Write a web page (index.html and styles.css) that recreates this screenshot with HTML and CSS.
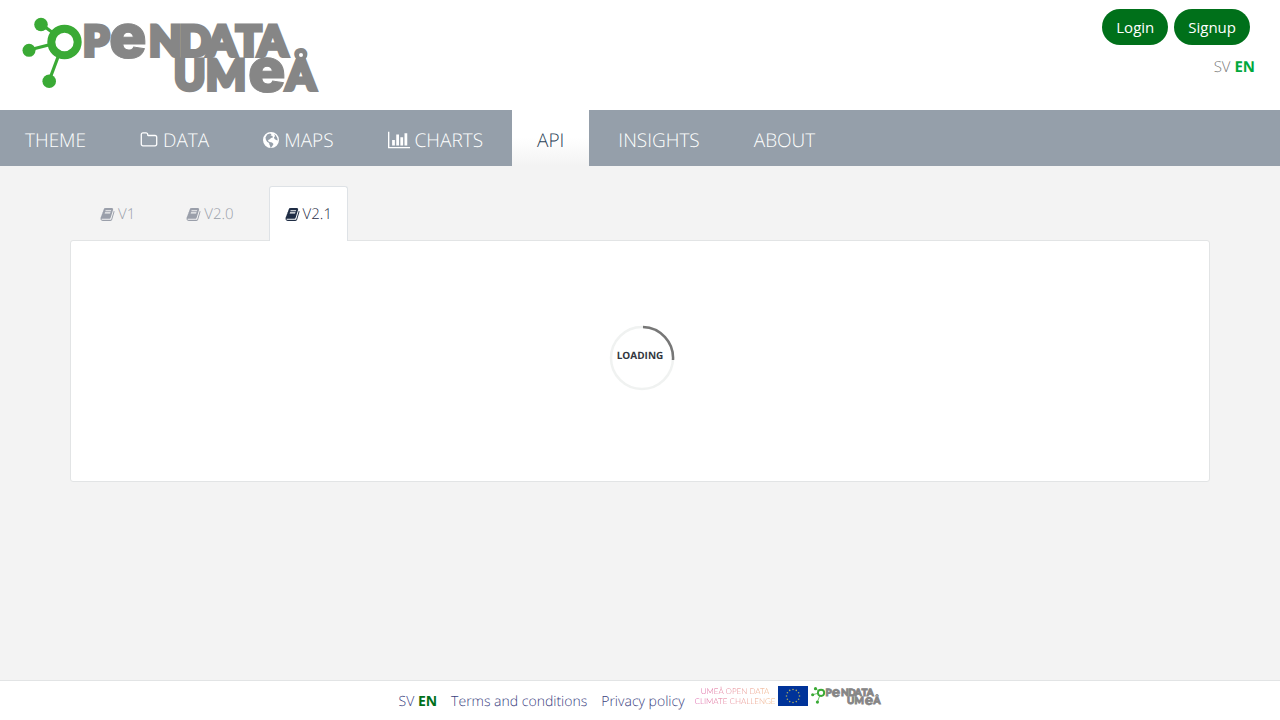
FILE: index.html
```html
<!DOCTYPE html>
<html lang="en">
<head>
  <meta charset="UTF-8" />
  <meta name="viewport" content="width=device-width, initial-scale=1.0"/>
  <title>API - Open Data Umeå</title>
  <link rel="stylesheet" href="styles.css">
</head>
<body>

  <!-- Shared icons -->
  <svg class="sprite" aria-hidden="true">
    <symbol id="logo" viewBox="22 17 296 77" overflow="visible">
      <g stroke="#3aaa35" stroke-width="3.2">
        <path d="M41 24L64 41L29 50M64 41L49 81" fill="none"/>
      </g>
      <g fill="#3aaa35">
        <circle cx="41" cy="24.500" r="6.800"/>
        <circle cx="29" cy="50.300" r="6.500"/>
        <circle cx="49.200" cy="81.200" r="6.800"/>
      </g>
      <circle cx="64.500" cy="42" r="13.200" fill="#fff" stroke="#3aaa35" stroke-width="8"/>
      <g class="logo-text">
        <text y="56" x="83">P</text>
        <text y="58" x="109" class="logo-e">e</text>
        <text y="56" x="149 179 207 236 258">NDATA</text>
        <text y="90" x="174 206">UM</text>
        <text y="92" x="248" class="logo-e">e</text>
        <text y="90" x="286">Å</text>
      </g>
      <circle cx="301" cy="55" r="4" fill="#fff" stroke="#868686" stroke-width="4"/>
    </symbol>
    <symbol id="folder" viewBox="0 0 1792 1792">
      <path d="M1600 1312v-704q0-40-28-68t-68-28h-704q-40 0-68-28t-28-68v-64q0-40-28-68t-68-28h-320q-40 0-68 28t-28 68v960q0 40 28 68t68 28h1216q40 0 68-28t28-68zm128-704v704q0 92-66 158t-158 66h-1216q-92 0-158-66t-66-158v-960q0-92 66-158t158-66h320q92 0 158 66t66 158v32h672q92 0 158 66t66 158z"/>
    </symbol>
    <symbol id="globe" viewBox="1 1 16 16">
      <path fill-rule="evenodd" d="M9 1a8 8 0 1 0 0 16a8 8 0 0 0 0-16zM5.200 3.600L8 2.600l1.500.6l-1 1.200l1.600.4l1 1.500l-2 .6l-1.700 1.700l-1.300.3l.2 1.300l1.500.9l2.200.3l1.500 1.500l-.8 1.700l-1.300 1.600l-.8.8l-.5-2l-.8-1.700l-.2-1.300l-2-1.200l-1.200-2l-.4-2.300zM12 3l1.800 1.300l1.500 2.700l.4 2.500l-1.500-.4l-1.700-1.200l-.5-1.600l1.200-1.400z"/>
    </symbol>
    <symbol id="chart" viewBox="0 0 2048 1792">
      <path d="M640 896v512h-256v-512h256zm384-512v1024h-256v-1024h256zm1024 1152v128h-2048v-1536h128v1408h1920zm-640-896v768h-256v-768h256zm384-384v1152h-256v-1152h256z"/>
    </symbol>
    <symbol id="book" viewBox="0 0 1792 1792">
      <path d="M1703 478q40 57 18 129l-275 906q-19 64-76.500 107.500t-122.500 43.500h-923q-77 0-148.500-53.500t-99.500-131.500q-24-67-2-127 0-4 3-27t4-37q1-8-3-21.500t-3-19.500q2-11 8-21t16.500-23.500 16.500-23.500q23-38 45-91.500t30-91.500q3-10 .5-30t-.5-28q3-11 17-28t17-23q21-36 42-92t25-90q1-9-2.500-32t.5-28q4-13 22-30.500t22-22.500q19-26 42.500-84.500t27.500-96.500q1-8-3-25.500t-2-26.500q2-8 9-18t18-23 17-21q8-12 16.500-30.500t15-35 16-36 19.500-32 26.500-23.500 36-11.500 47.500 5.500l-1 3q38-9 51-9h761q74 0 114 56t18 130l-274 906q-36 119-71.500 153.500t-128.500 34.500h-869q-27 0-38 15-11 16-1 43 24 70 144 70h923q29 0 56-15.500t35-41.500l300-987q7-22 5-57 38 15 59 43zm-1064 2q-4 13 2 22.500t20 9.500h608q13 0 25.500-9.500t16.500-22.500l21-64q4-13-2-22.500t-20-9.500h-608q-13 0-25.500 9.500t-16.500 22.500zm-83 256q-4 13 2 22.500t20 9.500h608q13 0 25.500-9.500t16.500-22.500l21-64q4-13-2-22.500t-20-9.500h-608q-13 0-25.500 9.500t-16.500 22.500z"/>
    </symbol>
  </svg>

  <header class="header">
    <a class="brand" href="#" aria-label="Open Data Umeå"><svg class="logo"><use href="#logo"/></svg></a>
    <div class="account">
      <div class="account-buttons">
        <button type="button">Login</button>
        <button type="button">Signup</button>
      </div>
      <div class="languages"><a href="#">SV</a> <a href="#" class="current">EN</a></div>
    </div>
  </header>

  <nav class="nav">
    <a href="#">THEME</a>
    <a href="#"><svg class="icon"><use href="#folder"/></svg>DATA</a>
    <a href="#"><svg class="icon round"><use href="#globe"/></svg>MAPS</a>
    <a href="#"><svg class="icon wide"><use href="#chart"/></svg>CHARTS</a>
    <a href="#" class="active">API</a>
    <a href="#">INSIGHTS</a>
    <a href="#">ABOUT</a>
  </nav>

  <main class="container">
    <div class="tabs">
      <a href="#"><svg class="icon"><use href="#book"/></svg>V1</a>
      <a href="#"><svg class="icon"><use href="#book"/></svg>V2.0</a>
      <a href="#" class="active"><svg class="icon"><use href="#book"/></svg>V2.1</a>
    </div>
    <div class="panel">
      <div class="loader">
        <svg class="spinner" viewBox="0 0 66 66">
          <circle cx="33" cy="33" r="31" fill="none" stroke="#f0f2f1" stroke-width="2.500"/>
          <path d="M34 2A31 31 0 0 1 64 35" fill="none" stroke="#777" stroke-width="2.500"/>
        </svg>
        <span>LOADING</span>
      </div>
    </div>
  </main>

  <footer class="footer">
    <div class="footer-languages"><a href="#">SV</a> <a href="#" class="current">EN</a></div>
    <a href="#">Terms and conditions</a>
    <a href="#">Privacy policy</a>
    <div class="partners">
      <a href="#" class="challenge"><span>UMEÅ OPEN DATA</span><span>CLIMATE CHALLENGE</span></a>
      <svg class="flag" viewBox="0 0 30 20">
        <rect width="30" height="20" fill="#039"/>
        <g fill="#a8a860">
          <circle cx="15" cy="3.500" r=".8"/><circle cx="18.300" cy="4.400" r=".8"/><circle cx="20.600" cy="6.800" r=".8"/>
          <circle cx="21.500" cy="10" r=".8"/><circle cx="20.600" cy="13.200" r=".8"/><circle cx="18.300" cy="15.600" r=".8"/>
          <circle cx="15" cy="16.500" r=".8"/><circle cx="11.700" cy="15.600" r=".8"/><circle cx="9.400" cy="13.200" r=".8"/>
          <circle cx="8.500" cy="10" r=".8"/><circle cx="9.400" cy="6.800" r=".8"/><circle cx="11.700" cy="4.400" r=".8"/>
        </g>
      </svg>
      <svg class="logo-small"><use href="#logo"/></svg>
    </div>
  </footer>

</body>
</html>
```
FILE: styles.css
```css
* {
  box-sizing: border-box;
}

body {
  margin: 0;
  min-height: 100vh;
  display: flex;
  flex-direction: column;
  background: #f3f3f3;
  color: #333;
  font-family: "Open Sans", sans-serif;
  font-size: 15px;
  font-weight: 300;
  text-rendering: geometricPrecision;
}

a {
  color: inherit;
  text-decoration: none;
}

.sprite {
  position: absolute;
  width: 0;
  height: 0;
}

.icon {
  width: 1em;
  height: 1em;
  fill: currentColor;
}

/* Header */
.header {
  display: flex;
  justify-content: space-between;
  height: 110px;
  padding: 9px 25px 0 22px;
  background: #fff;
}

.logo {
  display: block;
  width: 296px;
  height: 77px;
  margin-top: 8px;
  overflow: visible;
}

.logo-text {
  fill: #868686;
  stroke: #868686;
  stroke-width: 4px;
  font-family: Lato, sans-serif;
  font-size: 42px;
  font-weight: 900;
}

.logo-e {
  stroke-width: 1px;
  font-family: Inter, sans-serif;
  font-size: 62px;
}

.account {
  display: flex;
  flex-direction: column;
  align-items: flex-end;
  gap: 12px;
}

.account-buttons {
  display: flex;
  gap: 6px;
  margin-right: 5px;
}

.account-buttons button {
  height: 36px;
  padding: 0 14px;
  border: none;
  border-radius: 18px;
  background: #00701a;
  color: #fff;
  font-family: inherit;
  font-size: 15px;
  font-weight: 400;
  cursor: pointer;
}

.languages {
  color: #777;
  line-height: 20px;
}

.languages .current {
  color: #00a83c;
  font-weight: 700;
}

/* Navigation */
.nav {
  display: flex;
  gap: 4px;
  height: 56px;
  background: #959faa;
  color: #fff;
  font-size: 19px;
}

.nav a {
  display: flex;
  align-items: center;
  gap: 5px;
  padding: 4px 25px 0;
}

.nav .icon {
  width: 18px;
  height: 18px;
}

.nav .round {
  width: 16px;
  height: 16px;
}

.nav .wide {
  width: 22px;
  height: 20px;
}

.nav .active {
  background: linear-gradient(#fff 50%, #f3f3f3);
  color: #2c3f56;
}

/* API versions */
.container {
  flex: 1;
  width: 100%;
  max-width: 1170px;
  margin: 0 auto;
  padding: 20px 15px;
}

.tabs {
  display: flex;
  gap: 19px;
  padding-left: 14px;
}

.tabs a {
  display: flex;
  align-items: center;
  gap: 3px;
  height: 55px;
  margin-bottom: -1px;
  padding: 0 15px;
  border: 1px solid transparent;
  border-bottom: none;
  color: #9a9faa;
}

.tabs .active {
  position: relative;
  border-color: #dee2e6;
  border-radius: 3px 3px 0 0;
  background: #fff;
  color: #1f2d45;
}

.panel {
  display: flex;
  justify-content: center;
  padding: 84px 0 90px;
  border: 1px solid #e2e4e5;
  border-radius: 3px;
  background: #fff;
}

.loader {
  display: grid;
  place-items: center;
}

.loader > * {
  grid-area: 1 / 1;
}

.loader span {
  padding-bottom: 7px;
  color: #333740;
  font-size: 10px;
  font-weight: 700;
}

.spinner {
  width: 66px;
  height: 66px;
  margin-left: 4px;
}

/* Footer */
.footer {
  display: flex;
  justify-content: center;
  gap: 14px;
  height: 40px;
  border-top: 1px solid #e2e4e5;
  background: #fff;
  color: #3a4180;
  font-size: 14px;
  line-height: 41px;
}

.footer .current {
  color: #00701a;
  font-weight: 700;
}

.partners {
  display: flex;
  gap: 3px;
  margin-left: -4px;
  padding-top: 5px;
}

.challenge {
  display: flex;
  flex-direction: column;
  align-items: center;
  background: linear-gradient(90deg, #d6449a, #f0b070);
  background-clip: text;
  -webkit-background-clip: text;
  color: transparent;
  font-family: Lato, sans-serif;
  font-size: 8px;
  font-weight: 300;
  line-height: 10px;
}

.flag {
  width: 30px;
  height: 20px;
}

.logo-small {
  width: 70px;
  height: 20px;
  overflow: visible;
}
```
